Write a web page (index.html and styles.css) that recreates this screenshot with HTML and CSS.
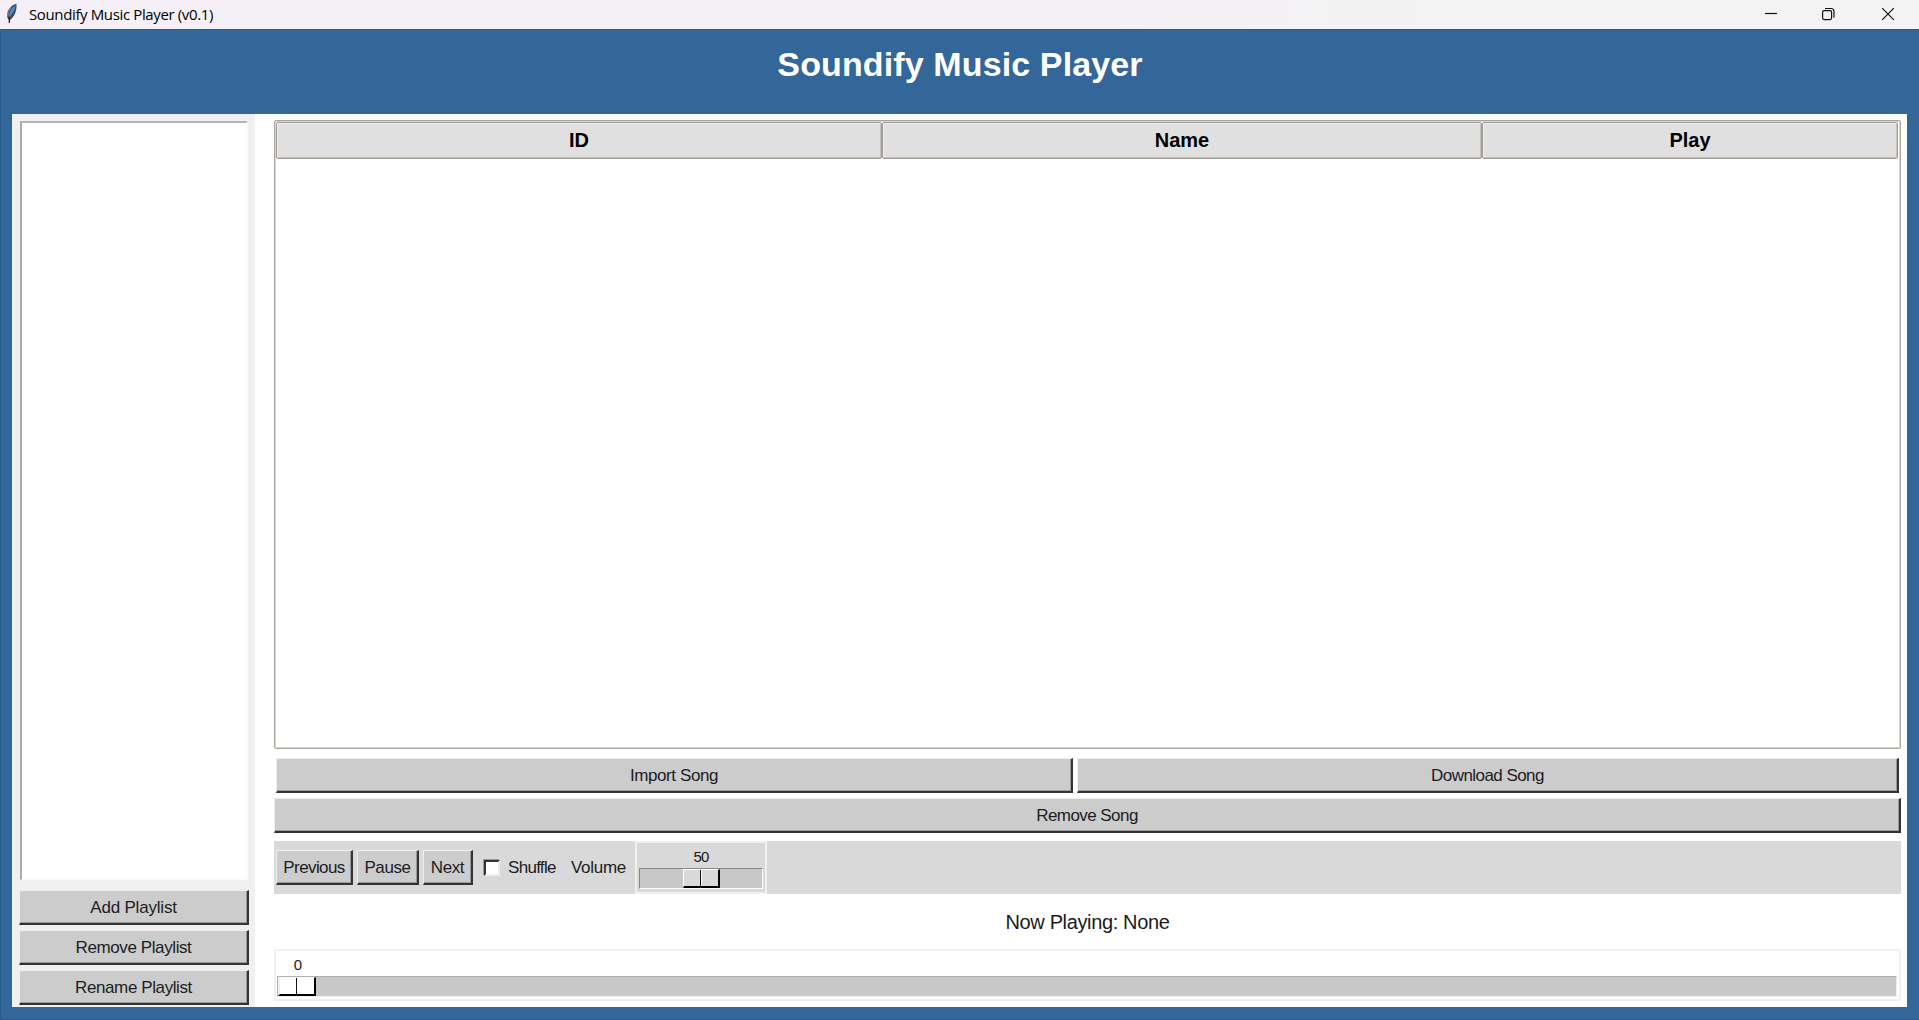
FILE: index.html
```html
<!DOCTYPE html>
<html lang="en">
<head>
<meta charset="utf-8">
<title>Soundify Music Player (v0.1)</title>
<link rel="stylesheet" href="styles.css">
</head>
<body>
<header class="titlebar">
  <svg class="feather" width="12" height="21" viewBox="0 0 12 21"><path d="M10.500.8C6 1.500 2 6 1.200 11c-.3 3 .3 5 1.800 6l.3 3 .8-3C8 14 11 9 10.500.8Z" fill="#454b55"/><path d="M9.500 2C6 5 3 8.500 3 14c3-2.500 6-7 6.500-12Z" fill="#4b8fdc"/><path d="M2 8v5M5 4 3 8" stroke="#9aa5b3" stroke-width=".8" fill="none"/><path d="M3.300 14v6" stroke="#222" stroke-width="1.200"/></svg>
  <span class="caption">Soundify Music Player (v0.1)</span>
  <div class="window-controls">
    <svg width="59" height="29" viewBox="0 0 59 29"><path d="M24 13.500h12"/></svg>
    <svg width="59" height="29" viewBox="0 0 59 29"><rect x="22.600" y="10.600" width="9" height="9" rx="1.500"/><path d="M25 8.500h6a3 3 0 0 1 3 3v6"/></svg>
    <svg width="59" height="29" viewBox="0 0 59 29"><path d="m23.200 8.200 11.600 11.600m0-11.600L23.200 19.800"/></svg>
  </div>
</header>
<main class="app">
  <h1 class="heading">Soundify Music Player</h1>
  <div class="panel">
    <aside class="sidebar">
      <div class="listbox"></div>
      <button class="btn add">Add Playlist</button>
      <button class="btn">Remove Playlist</button>
      <button class="btn">Rename Playlist</button>
    </aside>
    <section class="content">
      <div class="tree">
        <div class="tree-head"><div>ID</div><div>Name</div><div>Play</div></div>
      </div>
      <div class="song-row">
        <button class="btn">Import Song</button>
        <button class="btn download">Download Song</button>
      </div>
      <button class="btn remove">Remove Song</button>
      <div class="controls">
        <button class="btn prev">Previous</button>
        <button class="btn pause">Pause</button>
        <button class="btn next">Next</button>
        <span class="checkbox"></span>
        <span class="shuffle">Shuffle</span>
        <span class="volume-label">Volume</span>
        <div class="scale volume">
          <div class="value">50</div>
          <div class="trough"><div class="thumb"></div></div>
        </div>
      </div>
      <div class="now-playing">Now Playing: None</div>
      <div class="scale progress">
        <div class="value">0</div>
        <div class="trough"><div class="thumb"></div></div>
      </div>
    </section>
  </div>
</main>
</body>
</html>
```
FILE: styles.css
```css
* { box-sizing: border-box; }
body {
  margin: 0;
  height: 1020px;
  display: flex;
  flex-direction: column;
  overflow: hidden;
  font-family: "Liberation Sans", Arial, sans-serif;
  color: #1a1a1a;
}
.titlebar {
  height: 29px;
  display: flex;
  align-items: center;
  background: linear-gradient(90deg, #f5f0f7 0, #f5f0f6 55%, #f3f3f3 75%);
}
.feather { margin: -2px 0 0 6px; }
.caption {
  margin-left: 11px;
  font: 15px/29px "Open Sans", "Noto Sans", sans-serif;
  letter-spacing: -.37px;
  color: #000;
}
.window-controls { display: flex; margin-left: auto; margin-right: 1px; }
.window-controls svg { fill: none; stroke: #111; stroke-width: 1.2; }
.app {
  flex: 1;
  display: flex;
  flex-direction: column;
  padding: 0 12px 12px;
  background: #336699;
  border: solid #2b5c8c;
  border-width: 1px 0 1px 1px;
}
.heading {
  height: 84px;
  margin: 0;
  padding-top: 14px;
  text-align: center;
  font-size: 34px;
  line-height: 40px;
  letter-spacing: .12px;
  color: #fff;
}
.panel { flex: 1; display: flex; background: #fff; margin-left: -1px; }
.sidebar {
  width: 243px;
  padding: 7px 6px 2px 7px;
  display: flex;
  flex-direction: column;
  gap: 5px;
  background: #f0f0f0;
}
.listbox {
  flex: 1;
  margin: 0 1px 5px;
  background: #fff;
  border: solid;
  border-width: 2px 2px 1px 2px;
  border-color: #b4b4b4 #fafafa #fafafa #aaa;
}
.btn {
  height: 35px;
  padding: 1px 0 0;
  flex-shrink: 0;
  border: solid;
  border-width: 1px 2px 2px 1px;
  border-color: #eee #333 #333 #eee;
  box-shadow: inset -1px -1px #999;
  background: #ccc;
  font: 17px/31px "Liberation Sans", Arial, sans-serif;
  letter-spacing: -.4px;
  color: #1c1c24;
}
.add { letter-spacing: -.2px; }
.content {
  flex: 1;
  display: flex;
  flex-direction: column;
  padding: 6px 6px 6px 19px;
}
.tree {
  height: 629px;
  flex-shrink: 0;
  padding: 1px 2px 1px 1px;
  border: 1px solid #aaa69d;
  border-radius: 2px;
  box-shadow: inset 0 0 0 1px #d9d6ce;
}
.tree-head { display: grid; grid-template-columns: 606px 600px 1fr; height: 37px; }
.tree-head div {
  border: 1px solid #a29e95;
  border-radius: 2px;
  box-shadow: inset 1px 1px #eee, inset -1px -1px #c4c1ba;
  background: #e0e0e0;
  color: #000;
  text-align: center;
  font-weight: bold;
  font-size: 20px;
  line-height: 35px;
}
.song-row {
  display: grid;
  grid-template-columns: 797px 1fr;
  gap: 4px;
  padding: 0 2px;
  margin-top: 9px;
}
.download, .remove { letter-spacing: -.55px; }
.remove { margin-top: 5px; }
.controls {
  margin-top: 8px;
  height: 53px;
  flex-shrink: 0;
  display: flex;
  align-items: center;
  padding-left: 2px;
  background: #d9d9d9;
}
.prev { width: 77px; margin-right: 4px; letter-spacing: -.6px; }
.pause { width: 62px; margin-right: 4px; }
.next { width: 50px; margin-right: 11px; }
.checkbox {
  width: 16px;
  height: 16px;
  background: #fff;
  border: 2px solid;
  border-color: #333 #eee #eee #333;
  box-shadow: -1px -1px #999;
}
.shuffle, .volume-label { font-size: 17px; line-height: 20px; color: #1c1c24; padding-top: 1px; }
.shuffle { width: 63px; margin-left: 8px; letter-spacing: -.7px; }
.volume-label { width: 64px; letter-spacing: -.3px; }
.scale { border: 2px solid #f0f0f0; flex-shrink: 0; }
.value { font-size: 15px; line-height: 17px; text-align: center; letter-spacing: -.8px; }
.volume { width: 132px; height: 53px; padding: 5px 2px 0; }
.trough {
  height: 21px;
  background: #c8c8c8;
  border: solid;
  border-width: 1px;
  border-color: #888 #fff #fff #888;
}
.volume .trough { margin-top: 3px; }
.thumb {
  width: 37px;
  height: 19px;
  border: solid;
  border-width: 1px 2px 2px 1px;
  border-color: #fff #000 #000 #fff;
  background: linear-gradient(90deg, transparent 16px, #111 16px, #111 17px, #fff 17px, #fff 18px, transparent 18px), #d9d9d9;
}
.volume .thumb { margin-left: 43px; }
.now-playing {
  height: 55px;
  text-align: center;
  font-size: 20px;
  line-height: 56px;
  letter-spacing: -.36px;
}
.progress { height: 52px; padding: 5px 2px 0 1px; }
.progress .value { width: 41px; }
.progress .trough { margin-top: 3px; border-color: #b0b0b0 #eee #eee #b0b0b0; }
.progress .thumb { width: 38px; background-color: #fff; border-left: 2px solid #eee; }
```
